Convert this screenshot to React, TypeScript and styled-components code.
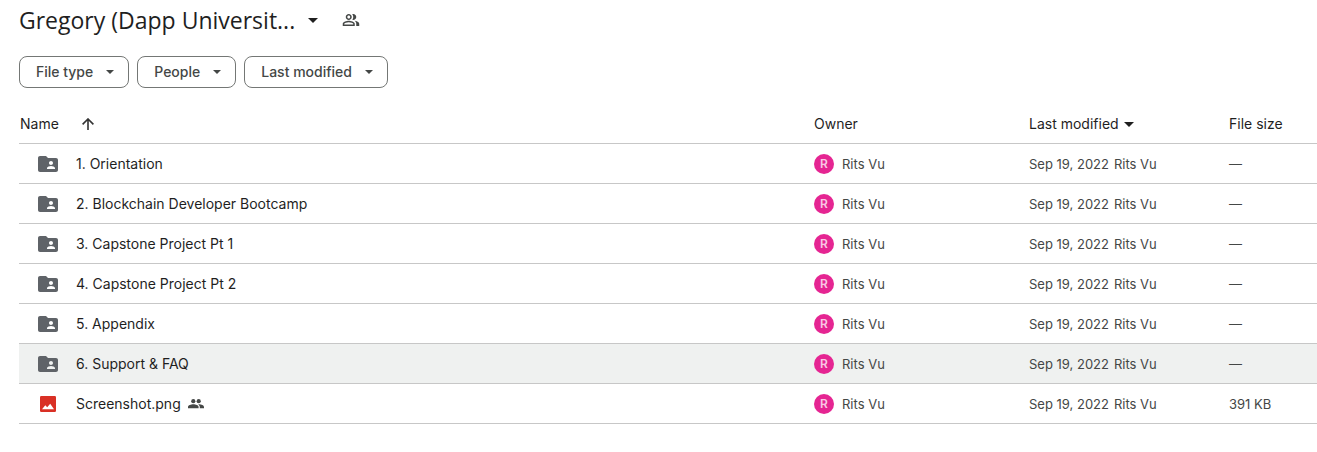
import React from "react";
import styled, { createGlobalStyle } from "styled-components";
import { MdFolderShared } from "react-icons/md";

const GlobalStyle = createGlobalStyle`
  * { box-sizing: border-box; }
  body {
    margin: 0;
    background: #ffffff;
    color: #1f1f1f;
    font-family: Inter, Roboto, sans-serif;
    font-size: 14px;
    line-height: 20px;
  }
  button { font: inherit; cursor: pointer; }
`;

const Page = styled.main`
  padding-left: 19px;
`;

const TitleBar = styled.header`
  display: flex;
  align-items: center;
  gap: 22px;
  height: 40px;
`;

const FolderButton = styled.button`
  display: flex;
  align-items: center;
  gap: 13px;
  padding: 0;
  border: 0;
  background: none;
  color: #1f1f1f;
`;

const Title = styled.h1`
  margin: 0;
  font-family: "Open Sans", sans-serif;
  font-size: 23px;
  font-weight: 400;
  line-height: 32px;
  white-space: nowrap;
`;

const IconButton = styled.button`
  display: flex;
  padding: 2px;
  border: 0;
  background: none;
  color: #444746;
`;

const Filters = styled.div`
  display: flex;
  gap: 8px;
  padding: 16px 0;
`;

const Chip = styled.button`
  display: flex;
  align-items: center;
  gap: 13px;
  height: 32px;
  padding: 0 14px 0 16px;
  border: 1px solid #747775;
  border-radius: 8px;
  background: #ffffff;
  color: #444746;
  font-weight: 500;
`;

const FileTable = styled.table`
  width: 100%;
  border-collapse: separate;
  border-spacing: 0;
  table-layout: fixed;
`;

const Column = styled.col<{ $width?: number }>`
  width: ${({ $width }) => ($width ? `${$width}px` : "auto")};
`;

const HeaderCell = styled.th`
  height: 40px;
  padding: 1px 0 0 1px;
  border-bottom: 1px solid #c7c7c7;
  font-weight: 400;
  text-align: left;
  white-space: nowrap;
`;

const SortButton = styled.button<{ $gap: number }>`
  display: flex;
  align-items: center;
  gap: ${({ $gap }) => $gap}px;
  padding: 0;
  border: 0;
  background: none;
  color: inherit;
`;

const Row = styled.tr<{ $hovered?: boolean }>`
  background: ${({ $hovered }) => ($hovered ? "#eff1f0" : "#ffffff")};
`;

const Cell = styled.td`
  height: 40px;
  padding: 1px 0 0 1px;
  border-bottom: 1px solid #c7c7c7;
  color: #444746;
  font-size: 13px;
  white-space: nowrap;
`;

const NameContent = styled.div`
  display: flex;
  align-items: center;
  gap: 16px;
  padding-left: 16px;
  color: #1f1f1f;
  font-size: 14px;
`;

const FileName = styled.span`
  display: flex;
  align-items: center;
  gap: 7px;
`;

const Owner = styled.div`
  display: flex;
  align-items: center;
  gap: 8px;
`;

const Avatar = styled.span`
  display: grid;
  place-items: center;
  width: 20px;
  height: 20px;
  border-radius: 50%;
  background: #e52592;
  color: #f9c9e4;
  font-size: 12px;
  font-weight: 600;
`;

const Modified = styled.div`
  display: flex;
  gap: 5px;
`;

function Caret() {
  return (
    <svg width="10" height="5" viewBox="0 0 10 5" fill="currentColor" aria-hidden="true">
      <path d="M0 0h10L5 5z" />
    </svg>
  );
}

function SmallCaret() {
  return (
    <svg width="8" height="4" viewBox="0 0 8 4" fill="currentColor" aria-hidden="true">
      <path d="M0 0h8L4 4z" />
    </svg>
  );
}

function PeopleOutline() {
  return (
    <svg width="18" height="18" viewBox="0 0 24 24" fill="currentColor" aria-hidden="true">
      <path d="M15 8c0-1.42-.5-2.73-1.33-3.76.42-.14.86-.24 1.33-.24 2.21 0 4 1.79 4 4s-1.79 4-4 4c-.43 0-.84-.09-1.23-.21-.03-.01-.06-.02-.1-.03A5.98 5.98 0 0 0 15 8zm1.66 5.13C18.03 14.06 19 15.32 19 17v3h4v-3c0-2.18-3.58-3.47-6.34-3.87zM9 6c-1.1 0-2 .9-2 2s.9 2 2 2 2-.9 2-2-.9-2-2-2m0-2c2.21 0 4 1.79 4 4s-1.79 4-4 4-4-1.79-4-4 1.79-4 4-4zm0 9c-2.67 0-8 1.34-8 4v3h16v-3c0-2.66-5.33-4-8-4zm6 5H3v-.99C3.2 16.29 6.3 15 9 15s5.8 1.29 6 2v1z" />
    </svg>
  );
}

function SharedPeople() {
  return (
    <svg width="16" height="10" viewBox="0 0 16 10" fill="#444746" role="img" aria-label="Shared">
      <circle cx="5.3" cy="2.2" r="2.1" />
      <circle cx="10.7" cy="2.2" r="2.1" />
      <path d="M0 9.2V8c0-1.7 3-2.7 5.3-2.7s5.3 1 5.3 2.7v1.2z" />
      <path d="M11.8 9.2V8c0-1.1-.6-1.9-1.5-2.6C12.7 5.1 16 6.200 16 8v1.200z" />
    </svg>
  );
}

function ArrowUp() {
  return (
    <svg width="12" height="12" viewBox="0 0 12 12" fill="none" stroke="#333333" strokeWidth="1.6" aria-hidden="true">
      <path d="M6 12V1M.6 6.4 6 1l5.4 5.4" />
    </svg>
  );
}

function ImageFile() {
  return (
    <svg width="24" height="24" viewBox="0 0 24 24" aria-hidden="true">
      <rect x="4" y="4" width="16" height="16" rx="1.2" fill="#d93025" />
      <path d="M6 17.200L9.300 13.300l1.900 1.900 3-3.500 3.800 5.500z" fill="#ffffff" />
    </svg>
  );
}

type FileEntry = {
  name: string;
  kind: "folder" | "image";
  size: string;
  shared?: boolean;
  hovered?: boolean;
};

const files: FileEntry[] = [
  { name: "1. Orientation", kind: "folder", size: "—" },
  { name: "2. Blockchain Developer Bootcamp", kind: "folder", size: "—" },
  { name: "3. Capstone Project Pt 1", kind: "folder", size: "—" },
  { name: "4. Capstone Project Pt 2", kind: "folder", size: "—" },
  { name: "5. Appendix", kind: "folder", size: "—" },
  { name: "6. Support & FAQ", kind: "folder", size: "—", hovered: true },
  { name: "Screenshot.png", kind: "image", size: "391 KB", shared: true },
];

const filters = ["File type", "People", "Last modified"];

export default function App() {
  return (
    <Page>
      <GlobalStyle />
      <TitleBar>
        <FolderButton>
          <Title>Gregory (Dapp Universit...</Title>
          <Caret />
        </FolderButton>
        <IconButton aria-label="Manage access">
          <PeopleOutline />
        </IconButton>
      </TitleBar>
      <Filters>
        {filters.map((label) => (
          <Chip key={label}>
            {label}
            <SmallCaret />
          </Chip>
        ))}
      </Filters>
      <FileTable>
        <colgroup>
          <Column />
          <Column $width={215} />
          <Column $width={200} />
          <Column $width={89} />
        </colgroup>
        <thead>
          <tr>
            <HeaderCell scope="col">
              <SortButton $gap={23}>
                Name
                <ArrowUp />
              </SortButton>
            </HeaderCell>
            <HeaderCell scope="col">Owner</HeaderCell>
            <HeaderCell scope="col">
              <SortButton $gap={5}>
                Last modified
                <Caret />
              </SortButton>
            </HeaderCell>
            <HeaderCell scope="col">File size</HeaderCell>
          </tr>
        </thead>
        <tbody>
          {files.map((file) => (
            <Row key={file.name} $hovered={file.hovered}>
              <Cell>
                <NameContent>
                  {file.kind === "folder" ? <MdFolderShared size={24} color="#5f6368" /> : <ImageFile />}
                  <FileName>
                    {file.name}
                    {file.shared && <SharedPeople />}
                  </FileName>
                </NameContent>
              </Cell>
              <Cell>
                <Owner>
                  <Avatar aria-hidden="true">R</Avatar>
                  Rits Vu
                </Owner>
              </Cell>
              <Cell>
                <Modified>
                  <span>Sep 19, 2022</span>
                  <span>Rits Vu</span>
                </Modified>
              </Cell>
              <Cell>{file.size}</Cell>
            </Row>
          ))}
        </tbody>
      </FileTable>
    </Page>
  );
}
